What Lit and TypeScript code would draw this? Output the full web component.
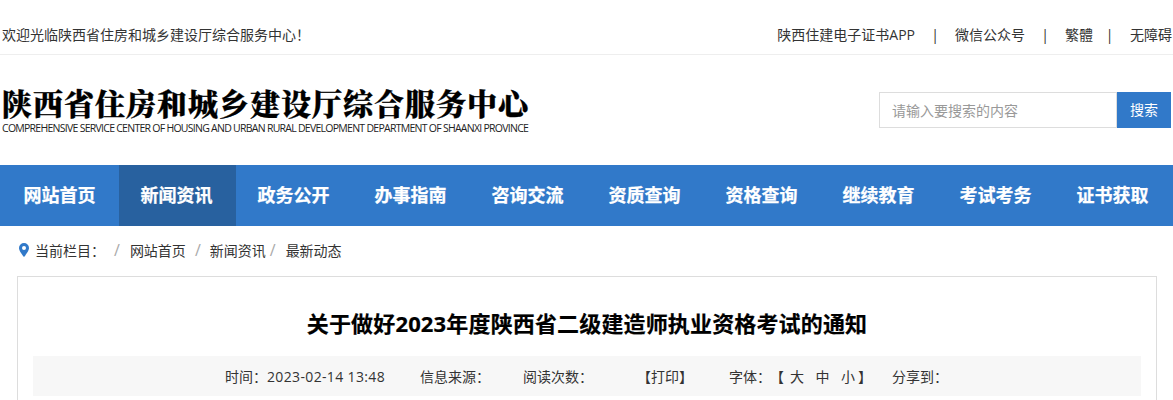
import { LitElement, html, css } from "lit";
import { customElement } from "lit/decorators.js";

const NAV = ["网站首页","新闻资讯","政务公开","办事指南","咨询交流","资质查询","资格查询","继续教育","考试考务","证书获取"];

@customElement("app-root")
export class AppRoot extends LitElement {
  static styles = css`
    :host { display: block; width: 1173px; height: 400px; overflow: hidden; background: #fff; font-family: "Open Sans", "Noto Sans CJK SC", sans-serif; color: #333; font-size: 14px; }
    .top { border-bottom: 1px solid #eee; display: flex; justify-content: space-between; padding: 24px 1px 0 2px; height: 30px; line-height: 22px; white-space: nowrap; }
    .links { display: flex; }
    .links span { flex: none; }
    .sep { width: 40px; text-align: center; }
    .sep.narrow { box-sizing: border-box; width: 37px; padding-right: 4px; }
    .head { height: 110px; display: flex; justify-content: space-between; }
    .brand { padding: 31px 0 0 2px; }
    .cn { font-family: "Noto Serif CJK SC", "Noto Sans CJK SC", serif; font-weight: 900; font-size: 30px; line-height: 32px; color: #000; letter-spacing: 1px; white-space: nowrap; -webkit-text-stroke: 0.3px #000; }
    .en { font-size: 10.5px; line-height: 14px; letter-spacing: -0.73px; color: #222; white-space: nowrap; margin-top: 3px; }
    .search { display: flex; margin: 37px 2px 0 0; height: 36px; }
    .field { box-sizing: border-box; width: 238px; border: 1px solid #ddd; padding-left: 12px; color: #999; line-height: 36px; }
    .btn { width: 54px; background: #3179c9; color: #fff; text-align: center; line-height: 36px; }
    nav { height: 61px; background: #3179c9; display: flex; padding-left: 2px; }
    nav a { box-sizing: border-box; width: 117px; padding-right: 2px; flex: none; text-align: center; color: #fff; font-size: 18px; font-weight: 700; line-height: 61px; -webkit-text-stroke: 0.25px #fff; }
    nav a.on { background: #28619f; }
    .crumb { display: flex; align-items: center; height: 50px; padding: 0 0 2px 19px; box-sizing: border-box; font-size: 14px; white-space: nowrap; }
    .crumb svg { margin-right: 6px; }
    .crumb i { font-style: normal; color: #aaa; font-size: 16px; line-height: 20px; }
    .s1 { margin: 0 10px 0 9px; }
    .s2 { margin: 0 9px 0 9px; }
    .s3 { margin: 0 10px 0 4px; }
    .card { margin: 0 16px 0 17px; border: 1px solid #ddd; padding: 0 15px; height: 200px; }
    h1 { margin: 0; text-align: center; font-size: 22px; font-weight: 700; color: #000; line-height: 30px; padding: 31px 0 18px; letter-spacing: 0.15px; -webkit-text-stroke: 0.2px #000; }
    .meta { height: 40px; background: #f7f7f7; display: flex; align-items: center; padding-left: 192px; font-size: 14px; white-space: nowrap; }
    .date { letter-spacing: 0.35px; }
    .m1 { margin-left: 35px; }
    .m2 { margin-left: 33px; }
    .m3 { margin-left: 44px; }
    .m4 { margin-left: 36px; }
    .sizes { display: flex; gap: 11.5px; margin-left: -1px; }
    .lb { margin-right: -5.5px; }
    .rb { margin-left: -8.5px; }
    .m6 { margin-left: 20px; }
  `;
  render() {
    return html`
      <div class="top">
        <span>欢迎光临陕西省住房和城乡建设厅综合服务中心！</span>
        <div class="links"><span>陕西住建电子证书APP</span><span class="sep">|</span><span>微信公众号</span><span class="sep">|</span><span>繁體</span><span class="sep narrow">|</span><span>无障碍</span></div>
      </div>
      <div class="head">
        <div class="brand">
          <div class="cn">陕西省住房和城乡建设厅综合服务中心</div>
          <div class="en">COMPREHENSIVE SERVICE CENTER OF HOUSING AND URBAN RURAL DEVELOPMENT DEPARTMENT OF SHAANXI PROVINCE</div>
        </div>
        <div class="search"><div class="field">请输入要搜索的内容</div><div class="btn">搜索</div></div>
      </div>
      <nav>${NAV.map((n, i) => html`<a class=${i === 1 ? "on" : ""}>${n}</a>`)}</nav>
      <div class="crumb">
        <svg width="10" height="14" viewBox="0 0 10 14"><path fill="#3179c9" fill-rule="evenodd" d="M5 0a5 5 0 0 1 5 5c0 3.4-5 9-5 9S0 8.400 0 5a5 5 0 0 1 5-5zm0 3a2 2 0 1 0 0 4 2 2 0 0 0 0-4z"/></svg>
        <span>当前栏目：</span><i class="s1">/</i><span>网站首页</span><i class="s2">/</i><span>新闻资讯</span><i class="s3">/</i><span>最新动态</span>
      </div>
      <div class="card">
        <h1>关于做好2023年度陕西省二级建造师执业资格考试的通知</h1>
        <div class="meta"><span>时间：<span class="date">2023-02-14 13:48</span></span><span class="m1">信息来源：</span><span class="m2">阅读次数：</span><span class="m3">【打印】</span><span class="m4">字体：</span><span class="sizes"><span class="lb">【</span><span>大</span><span>中</span><span>小</span><span class="rb">】</span></span><span class="m6">分享到：</span></div>
      </div>`;
  }
}
